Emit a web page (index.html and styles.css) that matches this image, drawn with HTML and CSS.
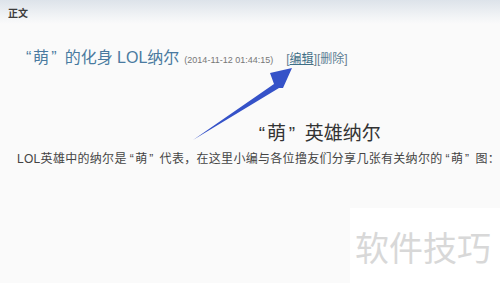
FILE: index.html
```html
<!DOCTYPE html>
<html lang="zh-CN">
<head>
  <meta charset="utf-8">
  <title>正文</title>
  <link rel="stylesheet" href="styles.css">
</head>
<body>

  <!-- top bar -->
  <div class="topbar">正文</div>

  <div class="article">
    <div class="title-row">
      <h2 class="title"><span class="qo">“</span>萌<span class="qc">”</span>的化身 LOL纳尔</h2>
      <span class="date">(2014-11-12 01:44:15)</span>
      <span class="tools">[<a href="#" class="edit">编辑</a>][<a href="#" class="del">删除</a>]</span>
    </div>

    <h3 class="sub"><span class="qo">“</span>萌<span class="qc">”</span>英雄纳尔</h3>

    <p class="body">LOL英雄中的纳尔是<span class="qo">“</span>萌<span class="qc">”</span>代表，在这里小编与各位撸友们分享几张有关纳尔的<span class="qo">“</span>萌<span class="qc">”</span>图：</p>
  </div>

  <!-- arrow drawn on top -->
  <svg class="arrow" width="500" height="283" viewBox="0 0 500 283">
    <polygon points="193,140 274,84 270,73 292,68 283,88 279,88" fill="#3552c8"/>
  </svg>

  <div class="mark">软件技巧</div>

</body>
</html>
```

FILE: styles.css
```css
body {
  margin: 0;
  background: #fafafa;
  font-family: "Liberation Sans", "Noto Sans CJK SC", sans-serif;
  width: 500px;
  height: 283px;
  overflow: hidden;
  position: relative;
}

/* chinese quotes get some room */
.qo {
  margin: 0 0.1em 0 0.25em;
}
.qc {
  margin: 0 0.5em 0 0.15em;
}

.topbar {
  height: 24px;
  padding: 5px 8px 0;
  box-sizing: border-box;
  font-size: 10px;
  font-weight: bold;
  color: #3c3c3c;
  background: linear-gradient(#dde3ea, #f2f4f6 70%, #fafafa);
}

.article {
  padding: 0 0 0 17px;
}

.title-row {
  display: flex;
  align-items: baseline;
  margin: 20px 0 0 5px;
}

.title {
  margin: 0;
  font-size: 16px;
  font-weight: normal;
  color: #4a7aa0;
}

.date {
  margin-left: 5px;
  font-size: 9px;
  color: #777;
}

.tools {
  margin-left: 13px;
  font-size: 12px;
  color: #6b8090;
}

.tools a {
  text-decoration: none;
  color: #5b7d92;
}

.tools .edit {
  text-decoration: underline;
  color: #3f6f86;
}

.sub {
  margin: 50px 0 0 237px;
  font-size: 19px;
  font-weight: normal;
  color: #333;
}

.body {
  margin: 4px 0 0;
  font-size: 12px;
  letter-spacing: 0.3px;
  color: #444;
  white-space: nowrap;
}

.arrow {
  position: absolute;
  left: 0;
  top: 0;
}

.mark {
  position: absolute;
  left: 350px;
  top: 208px;
  width: 150px;
  height: 75px;
  background: #fff;
  box-sizing: border-box;
  padding: 14px 0 0 5px;
  font-size: 34px;
  color: #d8d8d8;
  font-family: "Noto Sans CJK SC", sans-serif;
}
```
